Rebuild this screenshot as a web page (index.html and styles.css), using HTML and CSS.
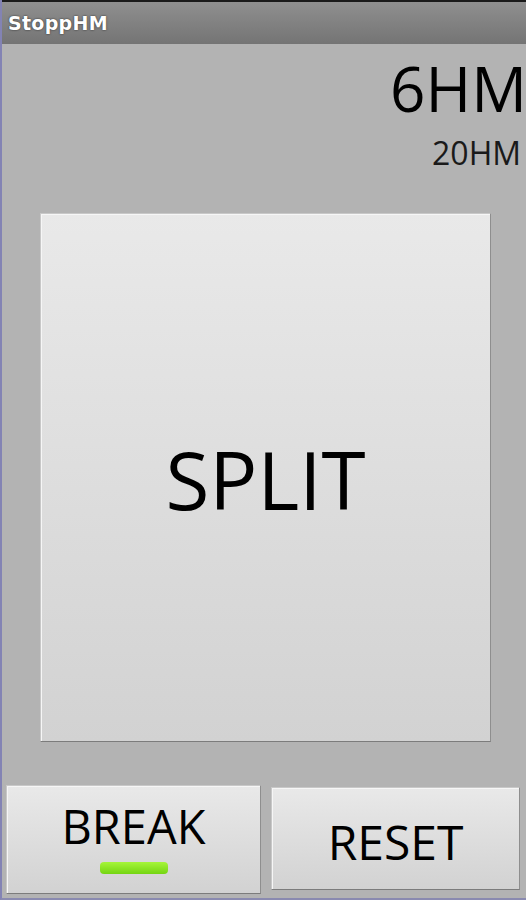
FILE: index.html
```html
<!DOCTYPE html>
<html>
<head>
<meta charset="utf-8">
<link rel="stylesheet" href="styles.css">
</head>
<body>
<div class="screen">
  <div class="titlebar"><span class="title">StoppHM</span></div>
  <div class="content">
    <div class="counts">
      <div class="big">6HM</div>
      <div class="small">20HM</div>
    </div>
    <div class="split-wrap">
      <div class="btn split">SPLIT</div>
    </div>
    <div class="row">
      <div class="btn toggle">
        <span class="label">BREAK</span>
        <span class="indicator"></span>
      </div>
      <div class="btn reset">RESET</div>
    </div>
  </div>
</div>
</body>
</html>
```
FILE: styles.css
```css
html, body {
  margin: 0;
  padding: 0;
}
body {
  width: 526px;
  height: 900px;
  overflow: hidden;
  font-family: "Open Sans", "DejaVu Sans", sans-serif;
}
.screen {
  width: 524px;
  height: 898px;
  border-left: 2px solid #8383b4;
  border-bottom: 2px solid #8a8ab0;
  background: #b3b3b3;
  display: flex;
  flex-direction: column;
}
.titlebar {
  height: 42px;
  border-top: 2px solid #1a1a1a;
  background: linear-gradient(#8f8f8f, #747474);
  display: flex;
  align-items: center;
  padding-left: 6px;
}
.title {
  color: #fff;
  font-family: "DejaVu Sans", sans-serif;
  font-weight: bold;
  font-size: 19px;
  text-shadow: 0 0 2px #222;
  letter-spacing: 0.3px;
}
.content {
  flex: 1;
  display: flex;
  flex-direction: column;
}
.counts {
  display: flex;
  flex-direction: column;
  align-items: flex-end;
  padding-right: 5px;
  color: #000;
}
.big {
  font-size: 62px;
  line-height: 56px;
  margin-top: 16px;
  margin-right: -6px;
}
.small {
  font-size: 32px;
  line-height: 30px;
  color: #1a1a1a;
  margin-top: 22px;
}
.split-wrap {
  padding: 45px 35px 0 38px;
}
.btn {
  background: linear-gradient(#e9e9e9, #d2d2d2);
  border: 1px solid #c8c8c8;
  border-right-color: #8e8e8e;
  border-bottom-color: #7c7c7c;
  box-shadow: inset 1px 1px 0 #f6f6f6;
  color: #000;
  display: flex;
  align-items: center;
  justify-content: center;
}
.split {
  height: 529px;
  font-size: 80px;
  padding-top: 2px;
  box-sizing: border-box;
}
.row {
  display: flex;
  gap: 10px;
  padding: 43px 3px 0 4px;
}
.toggle {
  width: 253px;
  height: 107px;
  flex-direction: column;
  justify-content: flex-start;
}
.label {
  font-size: 47px;
  line-height: 47px;
  margin-top: 17px;
  margin-left: 0;
}
.indicator {
  width: 68px;
  height: 12px;
  border-radius: 4px;
  background: linear-gradient(#a6f53a, #74d512);
  margin-top: 12px;
  margin-left: 0;
}
.reset {
  width: 249px;
  height: 103px;
  margin-top: 2px;
  font-size: 48px;
  padding-top: 6px;
  box-sizing: border-box;
}
```
